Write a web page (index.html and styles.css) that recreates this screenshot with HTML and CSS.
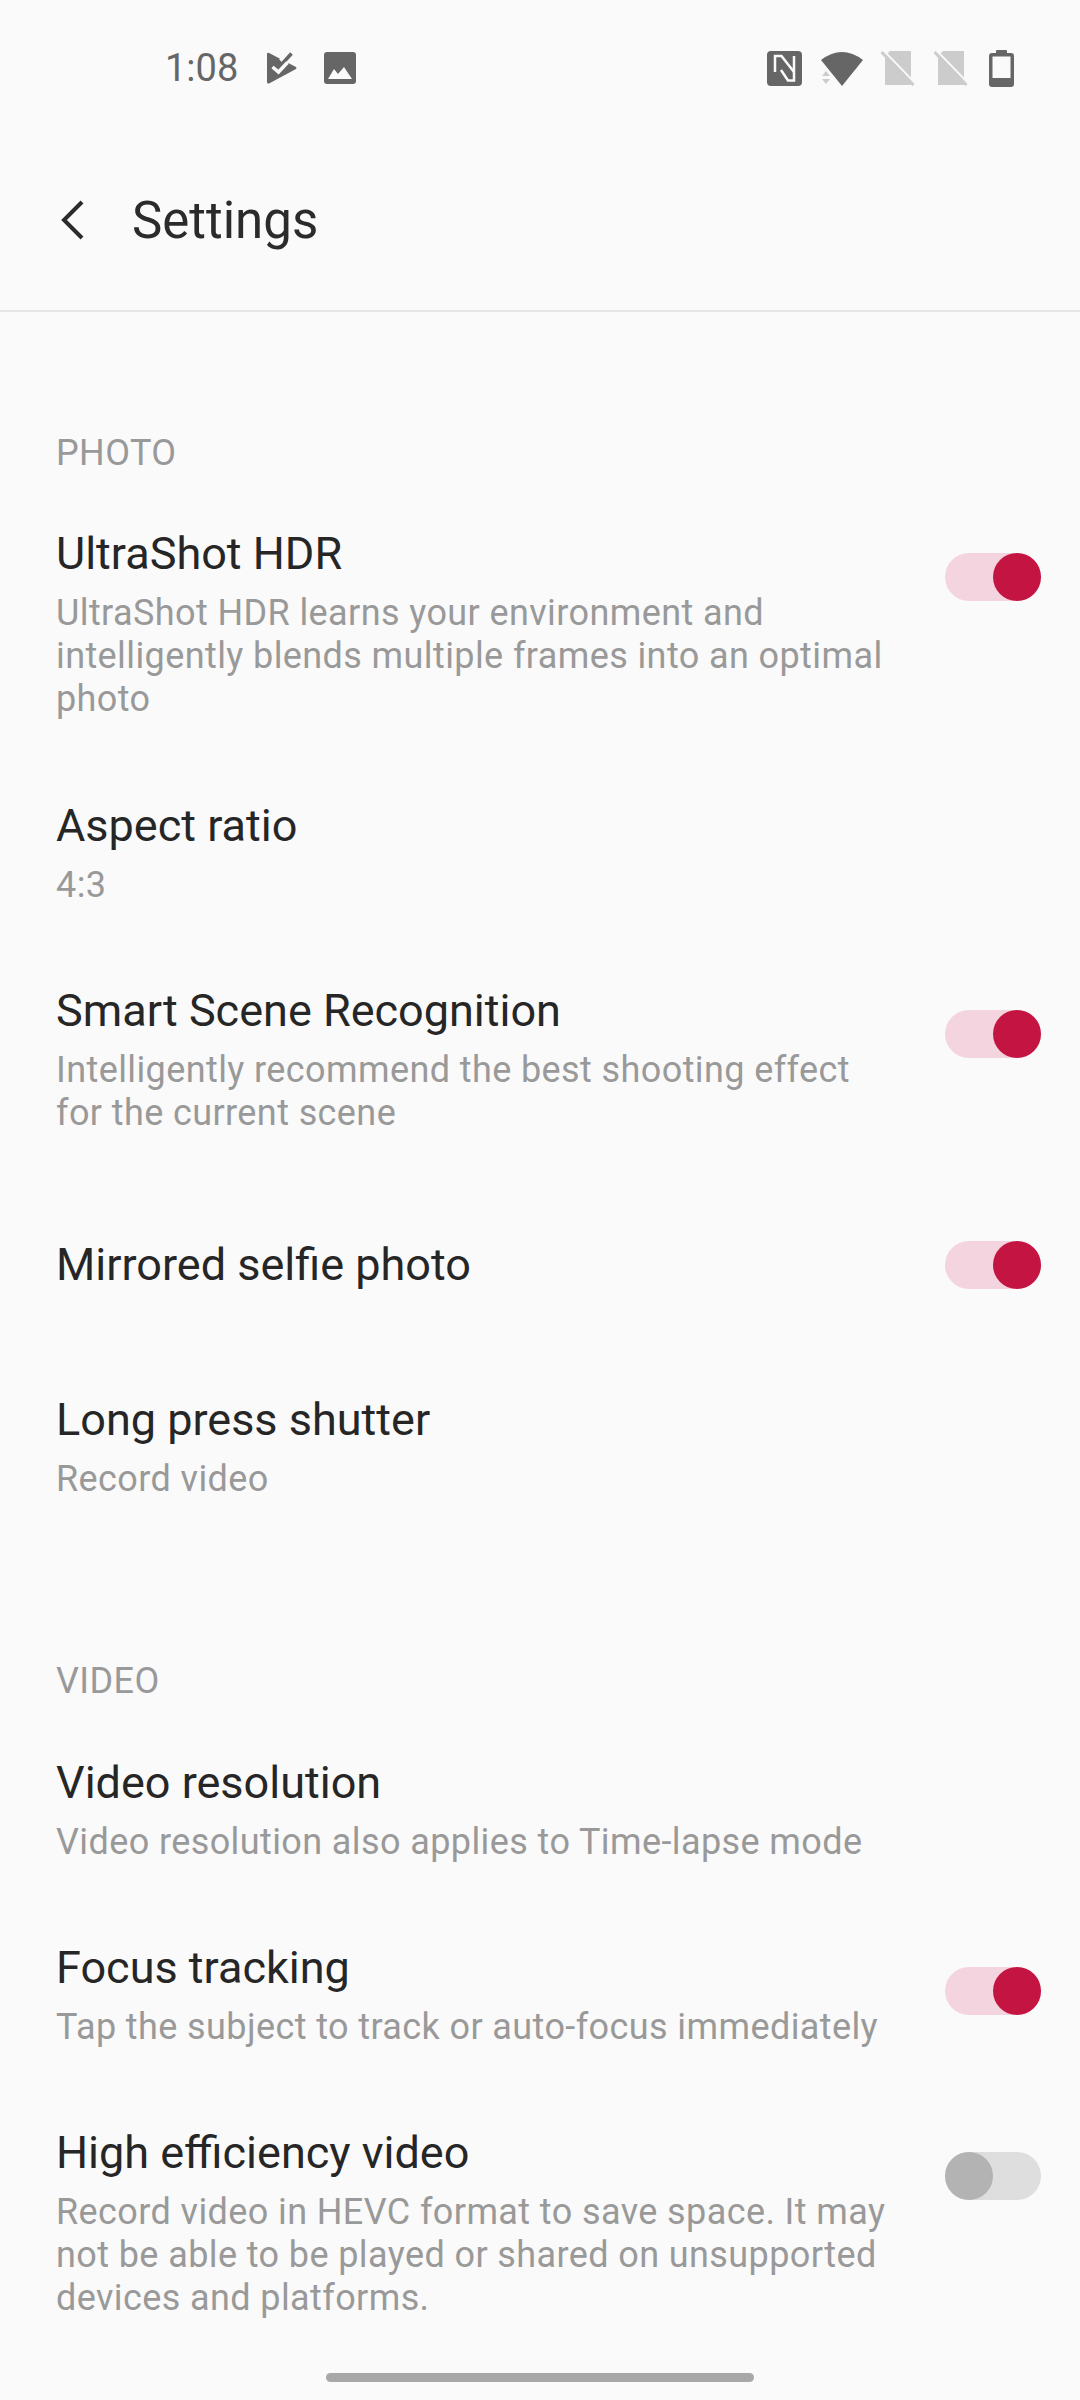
FILE: index.html
```html
<!DOCTYPE html>
<html lang="en">
<head>
    <meta charset="UTF-8">
    <title>Settings</title>
    <link rel="stylesheet" href="styles.css">
</head>
<body>
<div class="status-bar">
    <div class="status-left">
        <span class="time">1:08</span>
        <svg width="30" height="32" viewBox="0 0 30 32">
            <path d="M0 2Q0 0 2 1L29 15Q30 16 29 17L2 31.500Q0 32 0 30Z" fill="#666"/>
            <path d="M12 7L24 0H30V13L22 9.500L18 14Z" fill="#fafafa"/>
            <path d="M14.500 12.500L24.500 1.500" fill="none" stroke="#666" stroke-width="3.500"/>
            <path d="M5.500 15L11.500 20L20.500 10.500" fill="none" stroke="#fafafa" stroke-width="3.500"/>
        </svg>
        <svg class="ic-image" width="32" height="32" viewBox="0 0 32 32">
            <rect width="32" height="32" rx="3" fill="#666"/>
            <path d="M4 27L10 17L14 22L20 15L28 27Z" fill="#fafafa"/>
        </svg>
    </div>
    <div class="status-right">
        <svg width="35" height="35" viewBox="0 0 35 35">
            <rect width="35" height="35" rx="4" fill="#666"/>
            <path d="M8 21V5H14.500L27 21" fill="none" stroke="#fafafa" stroke-width="2.500"/>
            <path d="M27 5V29.500H21L14 19" fill="none" stroke="#fafafa" stroke-width="2.500"/>
        </svg>
        <svg width="42" height="35" viewBox="0 0 42 35">
            <path d="M0 9Q21 -7 42 9L21 35Z" fill="#666"/>
            <path d="M5 20L9 25H1ZM1 28H9L5 33Z" fill="#ccc"/>
        </svg>
        <svg class="ic-sim" width="36" height="36" viewBox="0 0 36 36">
            <path d="M5 6L10 1H31V35H5Z" fill="#ccc"/>
            <path d="M3 0L35 33" stroke="#fafafa" stroke-width="2"/>
            <path d="M1.500 2L33.500 35" stroke="#ccc" stroke-width="3"/>
        </svg>
        <svg class="ic-sim" width="36" height="36" viewBox="0 0 36 36">
            <path d="M5 6L10 1H31V35H5Z" fill="#ccc"/>
            <path d="M3 0L35 33" stroke="#fafafa" stroke-width="2"/>
            <path d="M1.500 2L33.500 35" stroke="#ccc" stroke-width="3"/>
        </svg>
        <svg class="ic-battery" width="25" height="37" viewBox="0 0 25 37">
            <path d="M7 3V1Q7 0 8 0H17Q18 0 18 1V3H22Q25 3 25 6V34Q25 37 22 37H3Q0 37 0 34V6Q0 3 3 3Z" fill="#666"/>
            <rect x="3.500" y="6.500" width="18" height="21.500" fill="#fafafa"/>
        </svg>
    </div>
</div>

<div class="header">
    <svg class="back" width="24" height="40" viewBox="0 0 24 40">
        <path d="M21 2L3 20L21 38" fill="none" stroke="#2b2b2b" stroke-width="4"/>
    </svg>
    <span class="header-title">Settings</span>
</div>

<div class="section-label label-photo">PHOTO</div>

<div class="row row-three">
    <div class="row-text">
        <div class="row-title">UltraShot HDR</div>
        <div class="row-sub">UltraShot HDR learns your environment and intelligently blends multiple frames into an optimal photo</div>
    </div>
    <div class="toggle on"></div>
</div>
<div class="row">
    <div class="row-text">
        <div class="row-title">Aspect ratio</div>
        <div class="row-sub">4:3</div>
    </div>
</div>
<div class="row">
    <div class="row-text">
        <div class="row-title">Smart Scene Recognition</div>
        <div class="row-sub">Intelligently recommend the best shooting effect for the current scene</div>
    </div>
    <div class="toggle on"></div>
</div>
<div class="row row-single">
    <div class="row-text">
        <div class="row-title">Mirrored selfie photo</div>
    </div>
    <div class="toggle on"></div>
</div>
<div class="row">
    <div class="row-text">
        <div class="row-title">Long press shutter</div>
        <div class="row-sub">Record video</div>
    </div>
</div>

<div class="section-label label-video">VIDEO</div>

<div class="row">
    <div class="row-text">
        <div class="row-title">Video resolution</div>
        <div class="row-sub">Video resolution also applies to Time-lapse mode</div>
    </div>
</div>
<div class="row">
    <div class="row-text">
        <div class="row-title">Focus tracking</div>
        <div class="row-sub">Tap the subject to track or auto-focus immediately</div>
    </div>
    <div class="toggle on"></div>
</div>
<div class="row">
    <div class="row-text">
        <div class="row-title">High efficiency video</div>
        <div class="row-sub">Record video in HEVC format to save space. It may not be able to be played or shared on unsupported devices and platforms.</div>
    </div>
    <div class="toggle off"></div>
</div>

<div class="home-bar"></div>
</body>
</html>
```

FILE: styles.css
```css
html, body {
    margin: 0;
    padding: 0;
}

body {
    width: 1080px;
    height: 2400px;
    position: relative;
    overflow: hidden;
    background-color: #fafafa;
    font-family: Roboto, sans-serif;
}

.status-bar {
    display: flex;
    justify-content: space-between;
    align-items: center;
    height: 136px;
    padding: 0 66px 0 165px;
    box-sizing: border-box;
}

.status-left, .status-right {
    display: flex;
    align-items: center;
}

.time {
    font-size: 38px;
    color: #666;
    width: 102px;
}

.ic-image {
    margin-left: 27px;
}

.status-right svg {
    margin-left: 19px;
}

.status-right .ic-sim {
    margin-left: 17px;
}

.status-right .ic-battery {
    margin-left: 20px;
}

.header {
    display: flex;
    align-items: center;
    height: 170px;
    padding-left: 61px;
    padding-bottom: 5px;
    border-bottom: 2px solid #e6e6e6;
    margin-top: -1px;
}

.header-title {
    font-size: 51px;
    color: #2b2b2b;
    margin-left: 47px;
}

.section-label {
    font-size: 36px;
    line-height: 44px;
    letter-spacing: 0.4px;
    color: #999;
    padding-left: 56px;
}

.label-photo {
    padding-top: 119px;
    padding-bottom: 13px;
}

.label-video {
    padding-top: 120px;
    padding-bottom: 14px;
}

.row {
    display: flex;
    justify-content: space-between;
    align-items: flex-start;
    padding: 38px 39px 38px 56px;
}

.row-three {
    padding-bottom: 39px;
}

.row-single {
    align-items: center;
    padding-top: 64px;
    padding-bottom: 61px;
}

.row-text {
    width: 840px;
}

.row-title {
    font-size: 45px;
    line-height: 56px;
    color: #262626;
}

.row-sub {
    font-size: 36px;
    line-height: 43px;
    letter-spacing: 0.4px;
    color: #999;
    margin-top: 10px;
}

.toggle {
    width: 96px;
    height: 48px;
    border-radius: 24px;
    display: flex;
    margin-top: 27px;
}

.row-single .toggle {
    margin-top: -1px;
}

.toggle::after {
    content: "";
    width: 48px;
    height: 48px;
    border-radius: 50%;
}

.toggle.on {
    background-color: #f4d4de;
    justify-content: flex-end;
}

.toggle.on::after {
    background-color: #c41442;
}

.toggle.off {
    background-color: #dedede;
}

.toggle.off::after {
    background-color: #b3b3b3;
}

.home-bar {
    position: absolute;
    left: 326px;
    top: 2373px;
    width: 428px;
    height: 9px;
    border-radius: 5px;
    background-color: #a8a8a8;
}
```
